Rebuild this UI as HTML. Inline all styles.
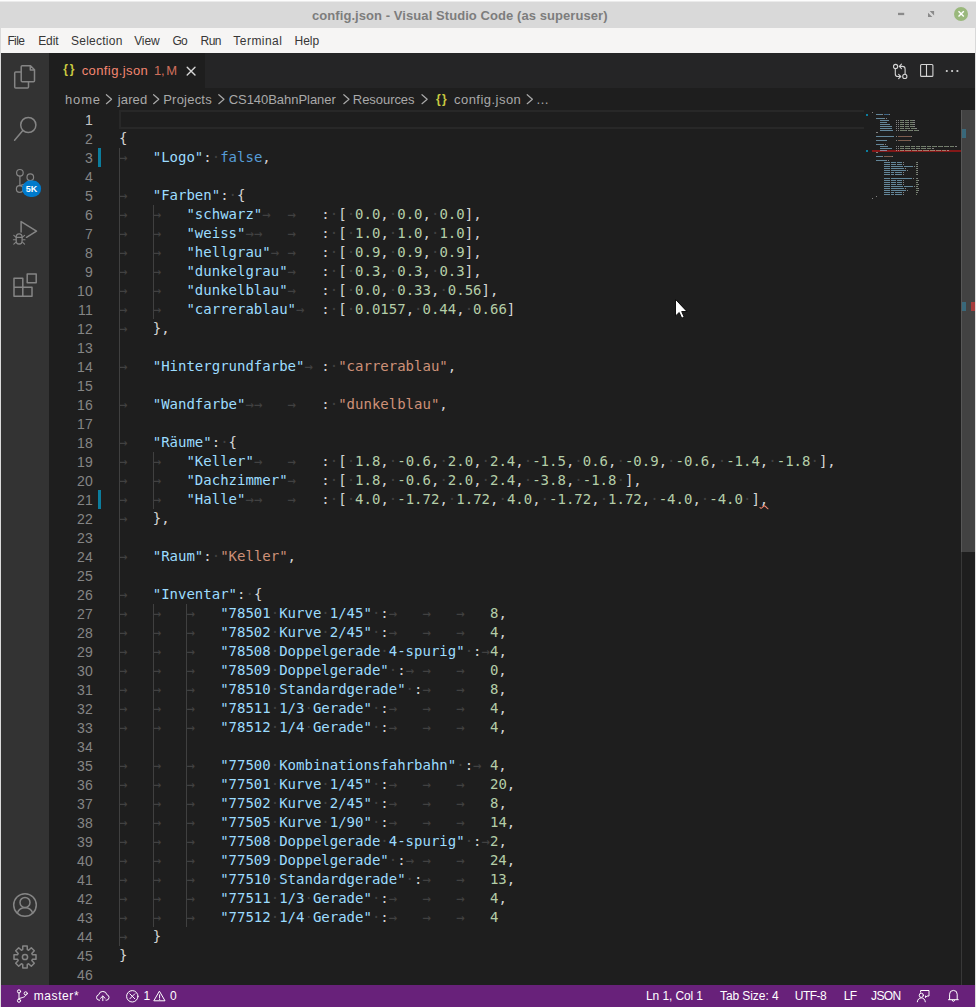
<!DOCTYPE html>
<html lang="en">
<head>
<meta charset="utf-8">
<title>config.json - Visual Studio Code (as superuser)</title>
<style>
*{box-sizing:border-box;margin:0;padding:0}
html,body{width:976px;height:1007px;overflow:hidden;background:#1e1e1e}
body{position:relative;font-family:"Liberation Sans",sans-serif;-webkit-font-smoothing:antialiased}
.abs,.t,.cl,.no,.g,svg.ic,svg.mm{position:absolute}
.t{white-space:pre;line-height:20px}
/* window chrome */
#titlebar{left:0;top:0;width:976px;height:28px;background:#d9d9d9;border-top:1px solid #fdfdfd;box-shadow:inset 0 1px 0 #ebebeb}
#menubar{left:0;top:28px;width:976px;height:25px;background:#f6f5f4;border-left:1px solid #d9d9d9;border-right:1px solid #d9d9d9}
#lborder{left:0;top:53px;width:1px;height:954px;background:#dcdcdc}
#rborder{left:975px;top:53px;width:1px;height:954px;background:#dcdcdc}
#activity{left:1px;top:53px;width:48px;height:932px;background:#333333}
#tabs{left:49px;top:53px;width:926px;height:35px;background:#252526}
#tab{left:49px;top:53px;width:156px;height:35px;background:#1e1e1e}
#status{left:1px;top:985px;width:974px;height:22px;background:#68217a}
#curline{left:119px;top:110px;width:745px;height:19px;border:2px solid #282828;border-right:0}
#scroll{left:961px;top:110px;width:14px;height:442px;background:#424242;border-left:1px solid #575757}
/* editor */
.cl{left:119px;height:19px;line-height:19px;font-family:"DejaVu Sans Mono","Liberation Mono",monospace;font-size:14px;color:#d4d4d4;white-space:pre;tab-size:4}
.cl i{font-style:normal;color:#414141}
.cl b{font-weight:normal}
.k{color:#9cdcfe}.s{color:#ce9178}.n{color:#b5cea8}.w{color:#569cd6}
.no{left:49px;width:44px;height:19px;line-height:21px;text-align:right;font-size:14px;color:#858585;letter-spacing:0.2px}
.no.act{color:#c6c6c6}
.g{width:1px;background:#404040}
.gm{left:98px;width:3px;height:19px;background:#0c7d9d}
</style>
</head>
<body>
<div class="abs" id="titlebar"></div>
<div class="abs" id="menubar"></div>
<div class="abs" id="activity"></div>
<div class="abs" id="tabs"></div>
<div class="abs" id="tab"></div>
<div class="abs" id="status"></div>
<div class="abs" id="lborder"></div>
<div class="abs" id="rborder"></div>
<div class="abs" id="curline"></div>
<div class="abs" style="left:961px;top:110px;width:1px;height:875px;background:#383838"></div>
<div class="abs" id="scroll"></div>
<div class="abs" style="left:962px;top:129px;width:4px;height:9px;background:#39687a"></div>
<div class="abs" style="left:962px;top:302px;width:4px;height:9px;background:#39687a"></div>
<div class="abs" style="left:971px;top:302px;width:4px;height:9px;background:#a63b3b"></div>
<div class="abs" style="left:872px;top:150px;width:89px;height:2px;background:rgba(255,18,18,0.45)"></div>
<div class="abs" style="left:866px;top:114px;width:2px;height:2px;background:#0c7d9d"></div>
<div class="abs" style="left:866px;top:150px;width:2px;height:2px;background:#0c7d9d"></div>
<div class="abs gm" style="top:148px"></div>
<div class="abs gm" style="top:490px"></div>
<div class="g" style="left:119px;top:148px;height:798px"></div><div class="g" style="left:153px;top:205px;height:114px"></div><div class="g" style="left:153px;top:452px;height:57px"></div><div class="g" style="left:153px;top:604px;height:323px"></div><div class="g" style="left:186px;top:604px;height:323px"></div>
<div class="no act" style="top:110px">1</div>
<div class="no" style="top:129px">2</div>
<div class="cl" style="top:129px">{</div>
<div class="no" style="top:148px">3</div>
<div class="cl" style="top:148px"><i>→   </i><b class="k">"Logo"</b>:<i>·</i><b class="w">false</b>,</div>
<div class="no" style="top:167px">4</div>
<div class="no" style="top:186px">5</div>
<div class="cl" style="top:186px"><i>→   </i><b class="k">"Farben"</b>:<i>·</i>{</div>
<div class="no" style="top:205px">6</div>
<div class="cl" style="top:205px"><i>→   </i><i>→   </i><b class="k">"schwarz"</b><i>→  </i><i>→   </i>:<i>·</i>[<i>·</i><b class="n">0.0</b>,<i>·</i><b class="n">0.0</b>,<i>·</i><b class="n">0.0</b>],</div>
<div class="no" style="top:224px">7</div>
<div class="cl" style="top:224px"><i>→   </i><i>→   </i><b class="k">"weiss"</b><i>→</i><i>→   </i><i>→   </i>:<i>·</i>[<i>·</i><b class="n">1.0</b>,<i>·</i><b class="n">1.0</b>,<i>·</i><b class="n">1.0</b>],</div>
<div class="no" style="top:243px">8</div>
<div class="cl" style="top:243px"><i>→   </i><i>→   </i><b class="k">"hellgrau"</b><i>→ </i><i>→   </i>:<i>·</i>[<i>·</i><b class="n">0.9</b>,<i>·</i><b class="n">0.9</b>,<i>·</i><b class="n">0.9</b>],</div>
<div class="no" style="top:262px">9</div>
<div class="cl" style="top:262px"><i>→   </i><i>→   </i><b class="k">"dunkelgrau"</b><i>→   </i>:<i>·</i>[<i>·</i><b class="n">0.3</b>,<i>·</i><b class="n">0.3</b>,<i>·</i><b class="n">0.3</b>],</div>
<div class="no" style="top:281px">10</div>
<div class="cl" style="top:281px"><i>→   </i><i>→   </i><b class="k">"dunkelblau"</b><i>→   </i>:<i>·</i>[<i>·</i><b class="n">0.0</b>,<i>·</i><b class="n">0.33</b>,<i>·</i><b class="n">0.56</b>],</div>
<div class="no" style="top:300px">11</div>
<div class="cl" style="top:300px"><i>→   </i><i>→   </i><b class="k">"carrerablau"</b><i>→  </i>:<i>·</i>[<i>·</i><b class="n">0.0157</b>,<i>·</i><b class="n">0.44</b>,<i>·</i><b class="n">0.66</b>]</div>
<div class="no" style="top:319px">12</div>
<div class="cl" style="top:319px"><i>→   </i>},</div>
<div class="no" style="top:338px">13</div>
<div class="no" style="top:357px">14</div>
<div class="cl" style="top:357px"><i>→   </i><b class="k">"Hintergrundfarbe"</b><i>→ </i>:<i>·</i><b class="s">"carrerablau"</b>,</div>
<div class="no" style="top:376px">15</div>
<div class="no" style="top:395px">16</div>
<div class="cl" style="top:395px"><i>→   </i><b class="k">"Wandfarbe"</b><i>→</i><i>→   </i><i>→   </i>:<i>·</i><b class="s">"dunkelblau"</b>,</div>
<div class="no" style="top:414px">17</div>
<div class="no" style="top:433px">18</div>
<div class="cl" style="top:433px"><i>→   </i><b class="k">"Räume"</b>:<i>·</i>{</div>
<div class="no" style="top:452px">19</div>
<div class="cl" style="top:452px"><i>→   </i><i>→   </i><b class="k">"Keller"</b><i>→   </i><i>→   </i>:<i>·</i>[<i>·</i><b class="n">1.8</b>,<i>·</i><b class="n">-0.6</b>,<i>·</i><b class="n">2.0</b>,<i>·</i><b class="n">2.4</b>,<i>·</i><b class="n">-1.5</b>,<i>·</i><b class="n">0.6</b>,<i>·</i><b class="n">-0.9</b>,<i>·</i><b class="n">-0.6</b>,<i>·</i><b class="n">-1.4</b>,<i>·</i><b class="n">-1.8</b><i>·</i>],</div>
<div class="no" style="top:471px">20</div>
<div class="cl" style="top:471px"><i>→   </i><i>→   </i><b class="k">"Dachzimmer"</b><i>→   </i>:<i>·</i>[<i>·</i><b class="n">1.8</b>,<i>·</i><b class="n">-0.6</b>,<i>·</i><b class="n">2.0</b>,<i>·</i><b class="n">2.4</b>,<i>·</i><b class="n">-3.8</b>,<i>·</i><b class="n">-1.8</b><i>·</i>],</div>
<div class="no" style="top:490px">21</div>
<div class="cl" style="top:490px"><i>→   </i><i>→   </i><b class="k">"Halle"</b><i>→</i><i>→   </i><i>→   </i>:<i>·</i>[<i>·</i><b class="n">4.0</b>,<i>·</i><b class="n">-1.72</b>,<i>·</i><b class="n">1.72</b>,<i>·</i><b class="n">4.0</b>,<i>·</i><b class="n">-1.72</b>,<i>·</i><b class="n">1.72</b>,<i>·</i><b class="n">-4.0</b>,<i>·</i><b class="n">-4.0</b><i>·</i>],</div>
<div class="no" style="top:509px">22</div>
<div class="cl" style="top:509px"><i>→   </i>},</div>
<div class="no" style="top:528px">23</div>
<div class="no" style="top:547px">24</div>
<div class="cl" style="top:547px"><i>→   </i><b class="k">"Raum"</b>:<i>·</i><b class="s">"Keller"</b>,</div>
<div class="no" style="top:566px">25</div>
<div class="no" style="top:585px">26</div>
<div class="cl" style="top:585px"><i>→   </i><b class="k">"Inventar"</b>:<i>·</i>{</div>
<div class="no" style="top:604px">27</div>
<div class="cl" style="top:604px"><i>→   </i><i>→   </i><i>→   </i><b class="k">"78501<i>·</i>Kurve<i>·</i>1/45"</b><i>·</i>:<i>→   </i><i>→   </i><i>→   </i><b class="n">8</b>,</div>
<div class="no" style="top:623px">28</div>
<div class="cl" style="top:623px"><i>→   </i><i>→   </i><i>→   </i><b class="k">"78502<i>·</i>Kurve<i>·</i>2/45"</b><i>·</i>:<i>→   </i><i>→   </i><i>→   </i><b class="n">4</b>,</div>
<div class="no" style="top:642px">29</div>
<div class="cl" style="top:642px"><i>→   </i><i>→   </i><i>→   </i><b class="k">"78508<i>·</i>Doppelgerade<i>·</i>4-spurig"</b><i>·</i>:<i>→</i><b class="n">4</b>,</div>
<div class="no" style="top:661px">30</div>
<div class="cl" style="top:661px"><i>→   </i><i>→   </i><i>→   </i><b class="k">"78509<i>·</i>Doppelgerade"</b><i>·</i>:<i>→ </i><i>→   </i><i>→   </i><b class="n">0</b>,</div>
<div class="no" style="top:680px">31</div>
<div class="cl" style="top:680px"><i>→   </i><i>→   </i><i>→   </i><b class="k">"78510<i>·</i>Standardgerade"</b><i>·</i>:<i>→   </i><i>→   </i><b class="n">8</b>,</div>
<div class="no" style="top:699px">32</div>
<div class="cl" style="top:699px"><i>→   </i><i>→   </i><i>→   </i><b class="k">"78511<i>·</i>1/3<i>·</i>Gerade"</b><i>·</i>:<i>→   </i><i>→   </i><i>→   </i><b class="n">4</b>,</div>
<div class="no" style="top:718px">33</div>
<div class="cl" style="top:718px"><i>→   </i><i>→   </i><i>→   </i><b class="k">"78512<i>·</i>1/4<i>·</i>Gerade"</b><i>·</i>:<i>→   </i><i>→   </i><i>→   </i><b class="n">4</b>,</div>
<div class="no" style="top:737px">34</div>
<div class="no" style="top:756px">35</div>
<div class="cl" style="top:756px"><i>→   </i><i>→   </i><i>→   </i><b class="k">"77500<i>·</i>Kombinationsfahrbahn"</b><i>·</i>:<i>→ </i><b class="n">4</b>,</div>
<div class="no" style="top:775px">36</div>
<div class="cl" style="top:775px"><i>→   </i><i>→   </i><i>→   </i><b class="k">"77501<i>·</i>Kurve<i>·</i>1/45"</b><i>·</i>:<i>→   </i><i>→   </i><i>→   </i><b class="n">20</b>,</div>
<div class="no" style="top:794px">37</div>
<div class="cl" style="top:794px"><i>→   </i><i>→   </i><i>→   </i><b class="k">"77502<i>·</i>Kurve<i>·</i>2/45"</b><i>·</i>:<i>→   </i><i>→   </i><i>→   </i><b class="n">8</b>,</div>
<div class="no" style="top:813px">38</div>
<div class="cl" style="top:813px"><i>→   </i><i>→   </i><i>→   </i><b class="k">"77505<i>·</i>Kurve<i>·</i>1/90"</b><i>·</i>:<i>→   </i><i>→   </i><i>→   </i><b class="n">14</b>,</div>
<div class="no" style="top:832px">39</div>
<div class="cl" style="top:832px"><i>→   </i><i>→   </i><i>→   </i><b class="k">"77508<i>·</i>Doppelgerade<i>·</i>4-spurig"</b><i>·</i>:<i>→</i><b class="n">2</b>,</div>
<div class="no" style="top:851px">40</div>
<div class="cl" style="top:851px"><i>→   </i><i>→   </i><i>→   </i><b class="k">"77509<i>·</i>Doppelgerade"</b><i>·</i>:<i>→ </i><i>→   </i><i>→   </i><b class="n">24</b>,</div>
<div class="no" style="top:870px">41</div>
<div class="cl" style="top:870px"><i>→   </i><i>→   </i><i>→   </i><b class="k">"77510<i>·</i>Standardgerade"</b><i>·</i>:<i>→   </i><i>→   </i><b class="n">13</b>,</div>
<div class="no" style="top:889px">42</div>
<div class="cl" style="top:889px"><i>→   </i><i>→   </i><i>→   </i><b class="k">"77511<i>·</i>1/3<i>·</i>Gerade"</b><i>·</i>:<i>→   </i><i>→   </i><i>→   </i><b class="n">4</b>,</div>
<div class="no" style="top:908px">43</div>
<div class="cl" style="top:908px"><i>→   </i><i>→   </i><i>→   </i><b class="k">"77512<i>·</i>1/4<i>·</i>Gerade"</b><i>·</i>:<i>→   </i><i>→   </i><i>→   </i><b class="n">4</b></div>
<div class="no" style="top:927px">44</div>
<div class="cl" style="top:927px"><i>→   </i>}</div>
<div class="no" style="top:946px">45</div>
<div class="cl" style="top:946px">}</div>
<div class="no" style="top:965px">46</div>
<svg class="mm" width="976" height="1007" viewBox="0 0 976 1007"><g fill="none" stroke-width="1" opacity="0.55"><path d="M876 114.5h6M876 118.5h8M880 120.5h9M880 122.5h7M880 124.5h10M880 126.5h12M880 128.5h12M880 130.5h13M876 136.5h18M876 140.5h11M876 144.5h7M880 146.5h8M880 148.5h12M880 150.5h7M876 156.5h6M876 160.5h10M884 162.5h6M891 162.5h5M897 162.5h5M884 164.5h6M891 164.5h5M897 164.5h5M884 166.5h6M891 166.5h12M904 166.5h9M884 168.5h6M891 168.5h13M884 170.5h6M891 170.5h15M884 172.5h6M891 172.5h3M895 172.5h7M884 174.5h6M891 174.5h3M895 174.5h7M884 178.5h6M891 178.5h21M884 180.5h6M891 180.5h5M897 180.5h5M884 182.5h6M891 182.5h5M897 182.5h5M884 184.5h6M891 184.5h5M897 184.5h5M884 186.5h6M891 186.5h12M904 186.5h9M884 188.5h6M891 188.5h13M884 190.5h6M891 190.5h15M884 192.5h6M891 192.5h3M895 192.5h7M884 194.5h6M891 194.5h3M895 194.5h7" stroke="#9cdcfe"/><path d="M898 136.5h13M898 140.5h12M884 156.5h8" stroke="#ce9178"/><path d="M872 112.5h1M882 114.5h1M889 114.5h1M884 118.5h1M886 118.5h1M896 120.5h1M898 120.5h1M903 120.5h1M908 120.5h1M913 120.5h1M914 120.5h1M896 122.5h1M898 122.5h1M903 122.5h1M908 122.5h1M913 122.5h1M914 122.5h1M896 124.5h1M898 124.5h1M903 124.5h1M908 124.5h1M913 124.5h1M914 124.5h1M896 126.5h1M898 126.5h1M903 126.5h1M908 126.5h1M913 126.5h1M914 126.5h1M896 128.5h1M898 128.5h1M903 128.5h1M909 128.5h1M915 128.5h1M916 128.5h1M896 130.5h1M898 130.5h1M906 130.5h1M912 130.5h1M918 130.5h1M876 132.5h1M877 132.5h1M896 136.5h1M911 136.5h1M896 140.5h1M910 140.5h1M883 144.5h1M885 144.5h1M896 146.5h1M898 146.5h1M903 146.5h1M909 146.5h1M914 146.5h1M919 146.5h1M925 146.5h1M930 146.5h1M936 146.5h1M942 146.5h1M948 146.5h1M955 146.5h1M956 146.5h1M896 148.5h1M898 148.5h1M903 148.5h1M909 148.5h1M914 148.5h1M919 148.5h1M925 148.5h1M932 148.5h1M933 148.5h1M896 150.5h1M898 150.5h1M903 150.5h1M910 150.5h1M916 150.5h1M921 150.5h1M928 150.5h1M934 150.5h1M940 150.5h1M947 150.5h1M948 150.5h1M876 152.5h1M877 152.5h1M882 156.5h1M892 156.5h1M886 160.5h1M888 160.5h1M903 162.5h1M917 162.5h1M903 164.5h1M917 164.5h1M914 166.5h1M917 166.5h1M905 168.5h1M917 168.5h1M907 170.5h1M917 170.5h1M903 172.5h1M917 172.5h1M903 174.5h1M917 174.5h1M913 178.5h1M917 178.5h1M903 180.5h1M918 180.5h1M903 182.5h1M917 182.5h1M903 184.5h1M918 184.5h1M914 186.5h1M917 186.5h1M905 188.5h1M918 188.5h1M907 190.5h1M918 190.5h1M903 192.5h1M917 192.5h1M903 194.5h1M876 196.5h1M872 198.5h1" stroke="#d4d4d4"/><path d="M900 120.5h3M905 120.5h3M910 120.5h3M900 122.5h3M905 122.5h3M910 122.5h3M900 124.5h3M905 124.5h3M910 124.5h3M900 126.5h3M905 126.5h3M910 126.5h3M900 128.5h3M905 128.5h4M911 128.5h4M900 130.5h6M908 130.5h4M914 130.5h4M900 146.5h3M905 146.5h4M911 146.5h3M916 146.5h3M921 146.5h4M927 146.5h3M932 146.5h4M938 146.5h4M944 146.5h4M950 146.5h4M900 148.5h3M905 148.5h4M911 148.5h3M916 148.5h3M921 148.5h4M927 148.5h4M900 150.5h3M905 150.5h5M912 150.5h4M918 150.5h3M923 150.5h5M930 150.5h4M936 150.5h4M942 150.5h4M916 162.5h1M916 164.5h1M916 166.5h1M916 168.5h1M916 170.5h1M916 172.5h1M916 174.5h1M916 178.5h1M916 180.5h2M916 182.5h1M916 184.5h2M916 186.5h1M916 188.5h2M916 190.5h2M916 192.5h1M916 194.5h1" stroke="#b5cea8"/><path d="M884 114.5h5" stroke="#569cd6"/></g></svg>
<span class="t" style="left:312.0px;top:5.7px;font-size:13px;color:#7d7d7d;font-weight:bold;letter-spacing:0.07px;">config.json - Visual Studio Code (as superuser)</span>
<span class="t" style="left:7.4px;top:30.8px;font-size:12px;color:#363636;letter-spacing:-0.60px;">File</span>
<span class="t" style="left:38.2px;top:30.8px;font-size:12px;color:#363636;letter-spacing:-0.11px;">Edit</span>
<span class="t" style="left:71.0px;top:30.8px;font-size:12px;color:#363636;letter-spacing:0.25px;">Selection</span>
<span class="t" style="left:134.2px;top:30.8px;font-size:12px;color:#363636;letter-spacing:-0.11px;">View</span>
<span class="t" style="left:172.4px;top:30.8px;font-size:12px;color:#363636;letter-spacing:-0.60px;">Go</span>
<span class="t" style="left:200.5px;top:30.8px;font-size:12px;color:#363636;letter-spacing:-0.52px;">Run</span>
<span class="t" style="left:233.3px;top:30.8px;font-size:12px;color:#363636;letter-spacing:0.47px;">Terminal</span>
<span class="t" style="left:294.5px;top:30.8px;font-size:12px;color:#363636;">Help</span>
<span class="t" style="left:63.2px;top:59.4px;font-size:12px;color:#cbcb41;font-weight:bold;letter-spacing:1.83px;">{}</span>
<span class="t" style="left:81.7px;top:60.6px;font-size:13px;color:#f48771;letter-spacing:0.40px;">config.json</span>
<span class="t" style="left:153.9px;top:60.6px;font-size:13px;color:#d06f5c;word-spacing:-2.05px;">1, M</span>
<span class="t" style="left:65.1px;top:89.5px;font-size:13px;color:#a9a9a9;letter-spacing:0.80px;">home</span>
<span class="t" style="left:117.8px;top:89.5px;font-size:13px;color:#a9a9a9;letter-spacing:0.11px;">jared</span>
<span class="t" style="left:163.2px;top:89.5px;font-size:13px;color:#a9a9a9;letter-spacing:0.22px;">Projects</span>
<span class="t" style="left:228.7px;top:89.5px;font-size:13px;color:#a9a9a9;letter-spacing:-0.04px;">CS140BahnPlaner</span>
<span class="t" style="left:352.8px;top:89.5px;font-size:13px;color:#a9a9a9;letter-spacing:-0.05px;">Resources</span>
<span class="t" style="left:435.9px;top:89.0px;font-size:12px;color:#cbcb41;font-weight:bold;letter-spacing:1.43px;">{}</span>
<span class="t" style="left:454.0px;top:89.5px;font-size:13px;color:#a9a9a9;letter-spacing:0.47px;">config.json</span>
<span class="t" style="left:536.0px;top:89.5px;font-size:13px;color:#a9a9a9;">…</span>
<span class="t" style="left:33.8px;top:985.8px;font-size:12px;color:#ffffff;letter-spacing:0.57px;">master*</span>
<span class="t" style="left:143.4px;top:985.8px;font-size:12px;color:#ffffff;">1</span>
<span class="t" style="left:170.0px;top:985.8px;font-size:12px;color:#ffffff;">0</span>
<span class="t" style="left:646.0px;top:985.8px;font-size:12px;color:#ffffff;letter-spacing:-0.10px;">Ln 1, Col 1</span>
<span class="t" style="left:720.0px;top:985.8px;font-size:12px;color:#ffffff;letter-spacing:-0.08px;">Tab Size: 4</span>
<span class="t" style="left:794.8px;top:985.8px;font-size:12px;color:#ffffff;letter-spacing:-0.53px;">UTF-8</span>
<span class="t" style="left:843.8px;top:985.8px;font-size:12px;color:#ffffff;letter-spacing:-0.60px;">LF</span>
<span class="t" style="left:871.0px;top:985.8px;font-size:12px;color:#ffffff;letter-spacing:-0.60px;">JSON</span>
<svg class="ic" style="left:0;top:0" width="976" height="1007" viewBox="0 0 976 1007" fill="none" stroke-linecap="round" stroke-linejoin="round">
<!-- window buttons -->
<rect x="898" y="12.8" width="6.2" height="2.3" fill="#8a8a8a"/>
<path d="M929.7 11h4.4v4.4zM928 12.7v4.4h4.4z" fill="#8a8a8a"/>
<circle cx="961" cy="14" r="7" fill="#9ab87c"/>
<path d="M958.5 11.3l5.3 5.3M963.8 11.3l-5.3 5.3" stroke="#fff" stroke-width="1.4" stroke-linecap="butt"/>
<!-- activity bar -->
<g stroke="#858585" stroke-width="1.5">
<path d="M22.2 65.7h8.3l4 4v11.1q0 1-1 1h-11.3q-1 0-1-1v-14.1q0-1 1-1z M30.3 65.9v4h4"/>
<path d="M20.6 72h-4.9q-1 0-1 1v14q0 1 1 1h11.8q1 0 1-1v-4.8"/>
<circle cx="28.3" cy="125" r="7.6"/>
<path d="M22.8 130.6l-8.2 9.7"/>
<circle cx="19.9" cy="172.8" r="3.3" stroke-width="1.2"/>
<circle cx="30.3" cy="177.2" r="3.3" stroke-width="1.2"/>
<circle cx="19.7" cy="189" r="3.3" stroke-width="1.2"/>
<path d="M19.9 176.1v9.6M30.3 180.5c0 4-5.5 3-10.2 5.2" stroke-width="1.2"/>
<path d="M21.1 232v-10.4l15.4 9.5-10 6.2"/>
<rect x="16.2" y="233.9" width="5.9" height="10.1" rx="2.9" ry="3.3" stroke-width="1.3"/>
<path d="M16.2 237.4h5.9M13.8 235.3l1.8 1.6M13.4 239.7h2.2M13.8 244.2l1.9-1.8M24.6 235.3l-1.8 1.6M25 239.7h-2.2M24.6 244.2l-1.9-1.8" stroke-width="1.1"/>
<path d="M14 278.2h8.8v9.1h-8.8zM14 287.3v9h18v-9h-9.2M22.8 287.3v9M27.2 274h9v8.8h-9z"/>
<circle cx="25" cy="905" r="11.3"/>
<circle cx="25" cy="902.4" r="5"/>
<path d="M17.3 913.2c1.2-3.6 4.2-5.4 7.7-5.4s6.5 1.8 7.7 5.4"/>
</g>
<!-- gear -->
<g stroke="#858585" stroke-width="1.5">
<circle cx="25" cy="957" r="2.6"/>
<path d="M22.7 949.6L22.8 946L27.2 946L27.3 949.6L28.6 950.2L31.3 947.7L34.3 950.7L31.8 953.4L32.4 954.7L36 954.8L36 959.2L32.4 959.3L31.8 960.6L34.3 963.3L31.3 966.3L28.6 963.8L27.3 964.4L27.2 968L22.8 968L22.7 964.4L21.4 963.8L18.7 966.3L15.7 963.3L18.2 960.6L17.6 959.3L14 959.2L14 954.8L17.6 954.7L18.2 953.4L15.7 950.7L18.7 947.7L21.4 950.2z"/>
</g>
<!-- badge -->
<rect x="22.1" y="180.6" width="19" height="16.4" rx="8.2" fill="#007acc"/>
<text x="31.6" y="192" font-family="Liberation Sans, sans-serif" font-size="9" font-weight="bold" fill="#fff" stroke="none" text-anchor="middle">5K</text>
<!-- tab close -->
<path d="M187.2 67.3l7.8 7.8M195 67.3l-7.8 7.8" stroke="#d6d6d6" stroke-width="1.4"/>
<!-- editor actions -->
<g stroke="#d4d4d4" stroke-width="1.1">
<circle cx="895.6" cy="66.5" r="2.1"/>
<circle cx="904.8" cy="76.4" r="2.1"/>
<path d="M895.3 68.8v5.1q0 2.6 2.6 2.6h2.7M898.6 74.3l2.2 2.2-2.2 2.2M905.1 74.1v-5.1q0-2.6-2.6-2.6h-3M901.5 64.2l-2.2 2.2 2.2 2.2"/>
<rect x="920.6" y="64.5" width="12.3" height="11.9" rx="1"/>
<path d="M926.5 64.5v11.9"/>
</g>
<g fill="#d4d4d4"><circle cx="946.8" cy="71" r="1.1"/><circle cx="952.1" cy="71" r="1.1"/><circle cx="957.4" cy="71" r="1.1"/></g>
<!-- breadcrumb chevrons -->
<g stroke="#a9a9a9" stroke-width="1.2"><path d="M106.4 94.7l5.2 4.5-5.2 4.5"/><path d="M153.6 94.7l5.2 4.5-5.2 4.5"/><path d="M218.8 94.7l5.2 4.5-5.2 4.5"/><path d="M343.8 94.7l5.2 4.5-5.2 4.5"/><path d="M422.0 94.7l5.2 4.5-5.2 4.5"/><path d="M527.2 94.7l5.2 4.5-5.2 4.5"/></g>
<!-- squiggle -->
<path d="M760 507.5q1 1.4 2.2 0t2-1.6 2 1.3 1.8 1.5" stroke="#f48771" stroke-width="1.1"/>
<!-- status bar icons -->
<g stroke="#fff" stroke-width="1">
<circle cx="19" cy="991.4" r="1.6"/><circle cx="25.7" cy="993.4" r="1.6"/><circle cx="19" cy="1000.7" r="1.6"/>
<path d="M19 993v6.1M25.7 995c0 2.6-4 2.4-6.7 3.6"/>
<path d="M99.6 1000.2h-.6a2.8 2.8 0 0 1-.3-5.5 4.2 4.2 0 0 1 8.2 0 2.8 2.8 0 0 1-.3 5.5h-.6M102.8 1000.7v-4.5M100.5 998.3l2.3-2.3 2.3 2.3"/>
<circle cx="132.3" cy="996.3" r="5.7"/>
<path d="M129.8 993.8l5 5M134.8 993.8l-5 5"/>
<path d="M159.6 991.5l5.4 9.3h-10.8zM159.6 994.8v3.2M159.6 999.3v.2"/>
<path d="M920.6 992.2v-1.7h8.4v5.5h-2l-1.5 1.6v-1.6"/>
<circle cx="921.3" cy="995.3" r="2.1"/>
<path d="M917.3 1001.8c.3-2.6 2-3.9 4-3.9s3.7 1.3 4 3.9"/>
<path d="M948.5 999.7h9.8M949.6 999.5v-5.3a3.8 3.8 0 0 1 7.6 0v5.3M952.3 1000.3a1.1 1.1 0 0 0 2.2 0"/>
</g>
<!-- mouse cursor -->
<path d="M675.5 299.7v16.3l3.7-3.5 2.5 5.7 2.5-1.1-2.5-5.6h5z" fill="#fff" stroke="#111" stroke-width="1" stroke-linejoin="miter"/>
</svg>

</body>
</html>
